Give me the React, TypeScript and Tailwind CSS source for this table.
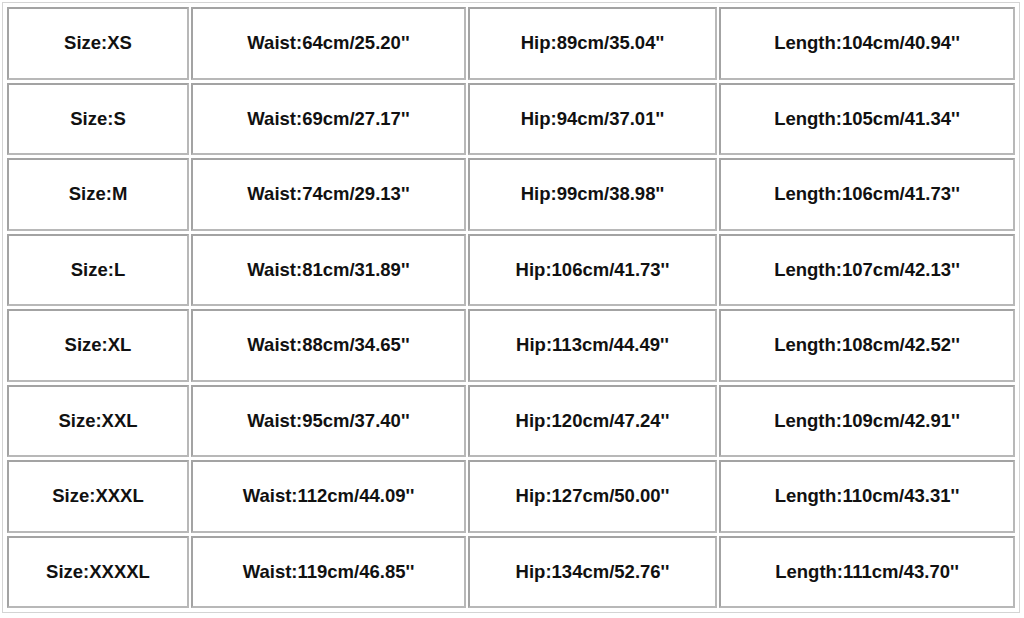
import React from "react";

const rows: string[][] = [
  ["Size:XS", "Waist:64cm/25.20''", "Hip:89cm/35.04''", "Length:104cm/40.94''"],
  ["Size:S", "Waist:69cm/27.17''", "Hip:94cm/37.01''", "Length:105cm/41.34''"],
  ["Size:M", "Waist:74cm/29.13''", "Hip:99cm/38.98''", "Length:106cm/41.73''"],
  ["Size:L", "Waist:81cm/31.89''", "Hip:106cm/41.73''", "Length:107cm/42.13''"],
  ["Size:XL", "Waist:88cm/34.65''", "Hip:113cm/44.49''", "Length:108cm/42.52''"],
  ["Size:XXL", "Waist:95cm/37.40''", "Hip:120cm/47.24''", "Length:109cm/42.91''"],
  ["Size:XXXL", "Waist:112cm/44.09''", "Hip:127cm/50.00''", "Length:110cm/43.31''"],
  ["Size:XXXXL", "Waist:119cm/46.85''", "Hip:134cm/52.76''", "Length:111cm/43.70''"],
];

export default function App() {
  return (
    <div className="w-[1024px] h-[618px] bg-white pt-[2px] pl-[2px] overflow-hidden">
      <div
        className="w-[1018px] h-[611px] border border-[#d4d4d4] p-[4px] grid grid-cols-[182px_275px_249px_1fr] grid-rows-8 gap-x-[2px] gap-y-[3px]"
        style={{ fontFamily: '"Liberation Sans", Arial, sans-serif' }}
      >
        {rows.flatMap((r, i) =>
          r.map((c, j) => (
            <div
              key={`${i}-${j}`}
              className="border-2 border-t-[#a3a3a3] border-l-[#a3a3a3] border-b-[#b8b8b8] border-r-[#b8b8b8] flex items-center justify-center text-[18.5px] font-bold text-[#111111]"
            >
              {c}
            </div>
          ))
        )}
      </div>
    </div>
  );
}
